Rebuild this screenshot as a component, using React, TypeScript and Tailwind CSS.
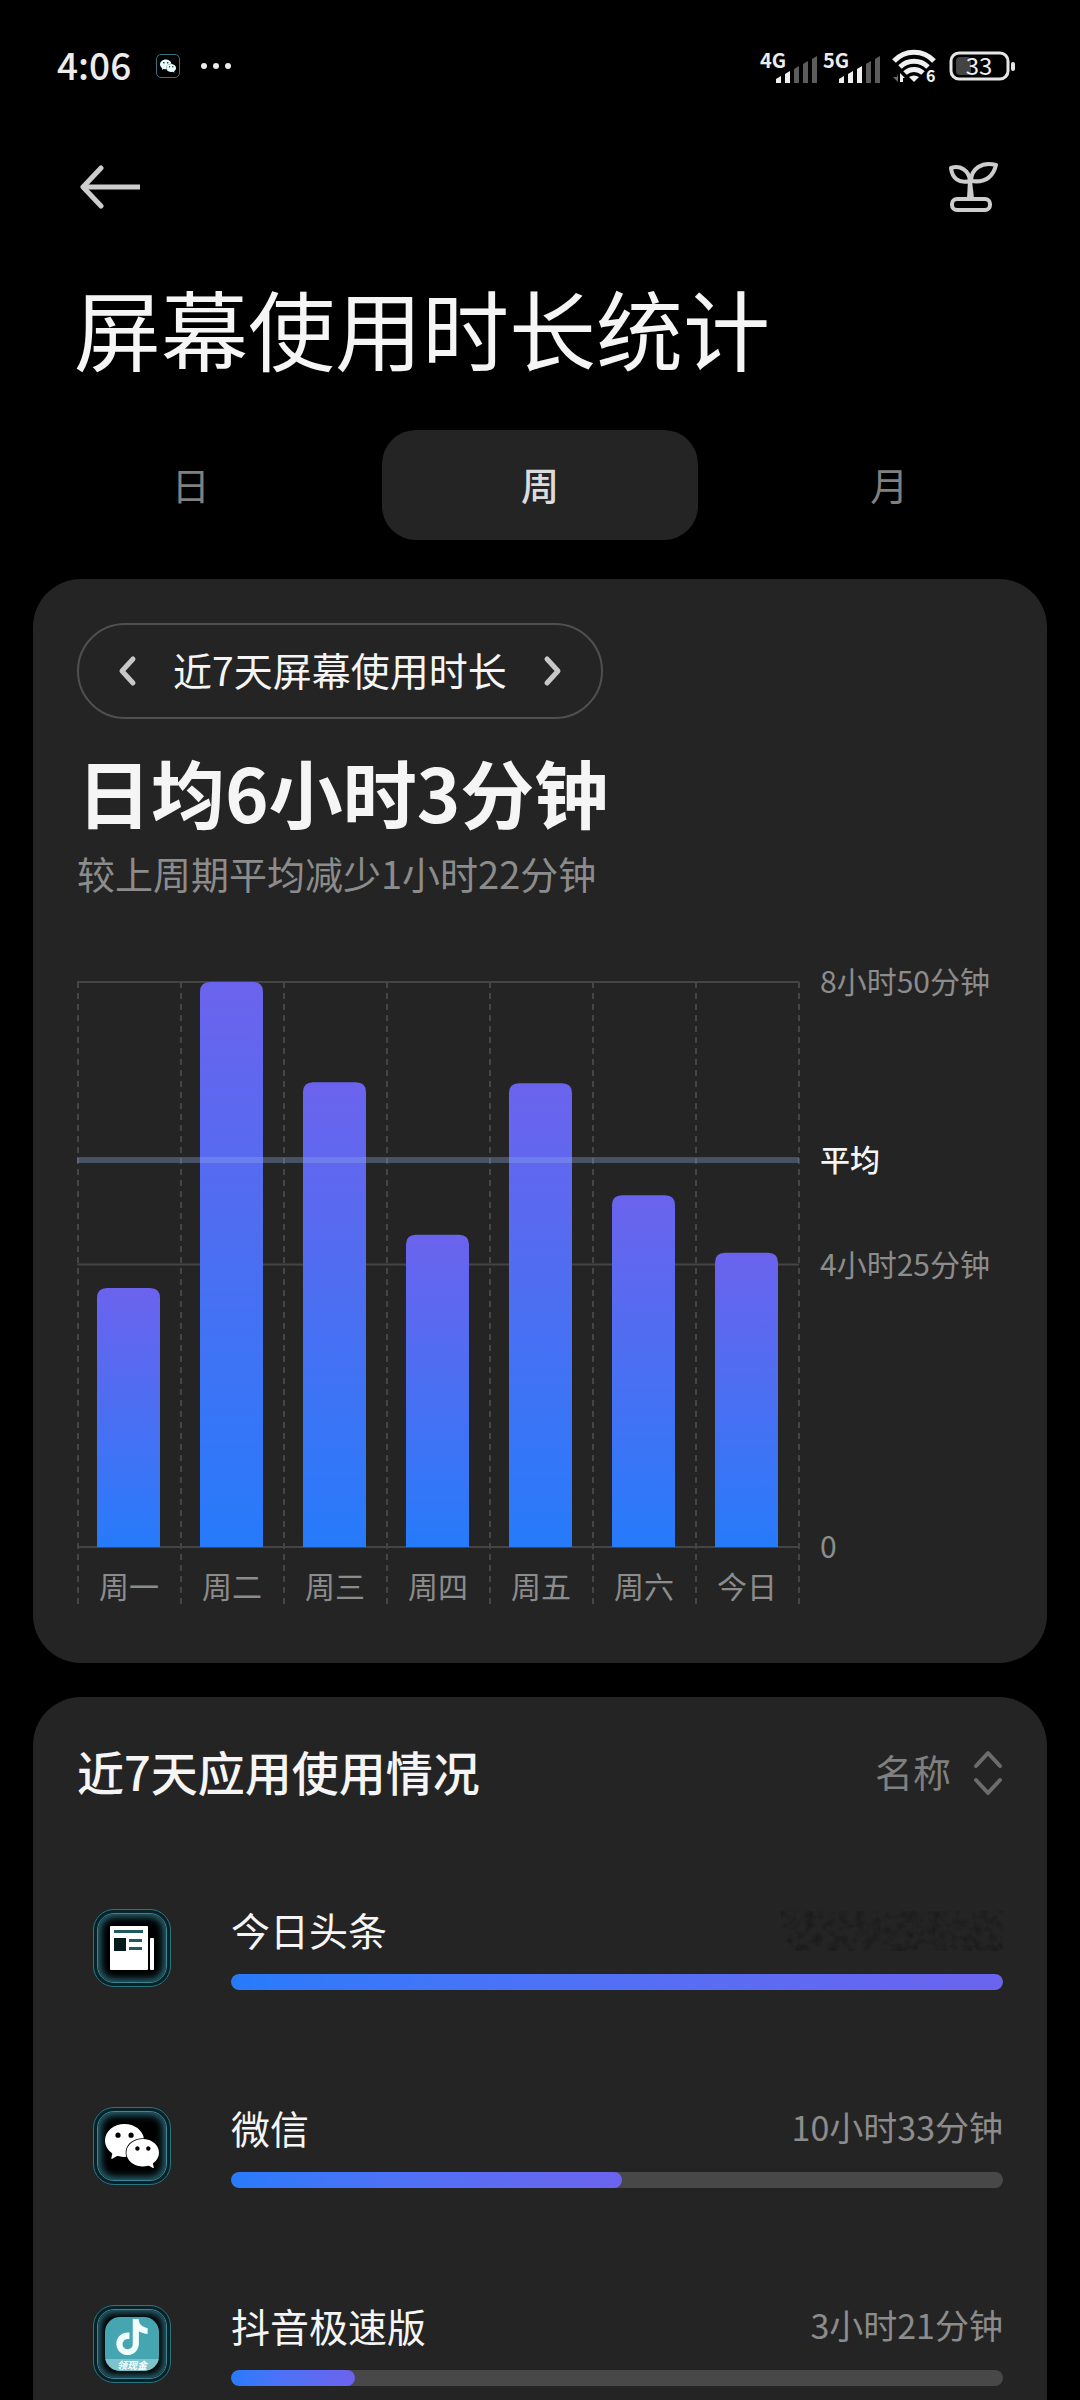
import React, { useState } from "react";
import { SiTiktok, SiWechat } from "react-icons/si";

// Dados da semana: altura da barra em minutos
const week = [
  { label: "周一", minutes: 243 },
  { label: "周二", minutes: 530 },
  { label: "周三", minutes: 436 },
  { label: "周四", minutes: 293 },
  { label: "周五", minutes: 435 },
  { label: "周六", minutes: 330 },
  { label: "今日", minutes: 276 },
];

const MAX_MINUTES = 530;
const AVERAGE_MINUTES = 363;

const apps = [
  { name: "今日头条", icon: "news", time: "", percent: 100 },
  { name: "微信", icon: "wechat", time: "10小时33分钟", percent: 50.7 },
  { name: "抖音极速版", icon: "douyin", time: "3小时21分钟", percent: 16.1 },
];

function Signal({ label, level }: { label: string; level: number }) {
  return (
    <span className="flex w-[58px] items-end">
      <span className="mb-3 w-4 text-[20px] leading-6 font-bold whitespace-nowrap">{label}</span>
      <svg viewBox="0 0 42 32" className="h-8 w-[42px] shrink-0">
        {[0, 1, 2, 3, 4].map((i) => (
          <path
            key={i}
            d={`M${i * 9} 31 v${-(4 + i * 5)} l5 -3 v${7 + i * 5} z`}
            fill={i < level ? "#f0f0f0" : "#5c5c5c"}
          />
        ))}
      </svg>
    </span>
  );
}

function StatusBar() {
  return (
    <div className="flex h-[132px] items-center justify-between pl-[57px] pr-16 text-[#ececec]">
      <div className="flex items-center">
        <span className="pb-1 text-[37px] leading-[48px] font-medium">4:06</span>
        <span className="ml-[25px] flex h-6 w-6 items-center justify-center rounded-[5px] border border-[#3f7280] bg-black">
          <SiWechat className="h-4 w-4 text-[#eafcff]" />
        </span>
        <svg viewBox="0 0 32 8" className="ml-5 h-2 w-8" fill="#ececec">
          <circle cx="4" cy="4" r="3" />
          <circle cx="16" cy="4" r="3" />
          <circle cx="28" cy="4" r="3" />
        </svg>
      </div>

      <div className="flex items-center">
        <Signal label="4G" level={2} />
        <span className="ml-[5px] flex">
          <Signal label="5G" level={3} />
        </span>
        {/* Wi-Fi 6 */}
        <svg viewBox="0 0 44 34" className="ml-[11px] h-[34px] w-11 overflow-visible" fill="none" stroke="#f0f0f0" strokeWidth="5">
          <path d="M2 12 A27 27 0 0 1 42 12" />
          <path d="M8 18 A20 20 0 0 1 36 18" />
          <path d="M13 24 A13 13 0 0 1 31 24" />
          <path d="M17 28 Q22 25 27 28 L22 33 Z" fill="#f0f0f0" stroke="none" />
          <path d="M6 25 v8 l-5 -5 h4 z" fill="#6a6a6a" stroke="none" />
          <path d="M8 33 v-9 l5 5 h-2 v4 z" fill="#f0f0f0" stroke="none" />
          <text x="34" y="33" fontSize="16" fontWeight="700" fill="#f0f0f0" stroke="#000" strokeWidth="2" paintOrder="stroke">
            6
          </text>
        </svg>
        <svg viewBox="0 0 67 30" className="ml-[13px] h-[30px] w-[67px] overflow-visible">
          <rect x="2" y="2" width="57" height="26" rx="8" fill="none" stroke="#e6e6e6" strokeWidth="3" />
          <rect x="7" y="6" width="15" height="18" rx="4" fill="#444" />
          <rect x="62" y="11" width="4" height="9" rx="2" fill="#e6e6e6" />
          <text x="30" y="24" fontSize="24" textAnchor="middle" fill="#f0f0f0">
            33
          </text>
        </svg>
      </div>
    </div>
  );
}

function UsageChart() {
  // A área do gráfico vai de y=42 até y=607
  const top = 42;
  const base = 607;
  const column = 103;
  const yOf = (minutes: number) => base - (minutes / MAX_MINUTES) * (base - top);

  return (
    <svg viewBox="0 0 926 670" className="mt-[41px] block w-full overflow-visible" role="img" aria-label="近7天屏幕使用时长">
      <defs>
        <linearGradient id="bar" x1="0" y1="0" x2="0" y2="1">
          <stop offset="0" stopColor="#6b63ee" />
          <stop offset="0.5" stopColor="#4a6ff2" />
          <stop offset="1" stopColor="#267bfb" />
        </linearGradient>
      </defs>

      {/* Linhas verticais tracejadas */}
      {[0, 1, 2, 3, 4, 5, 6, 7].map((i) => (
        <line key={i} x1={1 + i * column} x2={1 + i * column} y1={top} y2="665" stroke="#454545" strokeWidth="2" strokeDasharray="6 5" />
      ))}

      {[MAX_MINUTES, MAX_MINUTES / 2, 0].map((m) => (
        <line key={m} x1="0" x2="722" y1={yOf(m)} y2={yOf(m)} stroke="#444444" strokeWidth="2" />
      ))}

      {week.map((day, i) => {
        const x = 20 + i * column;
        const y = yOf(day.minutes);
        return (
          <g key={day.label}>
            <path d={`M${x} ${base} V${y + 10} q0 -10 10 -10 h43 q10 0 10 10 V${base} z`} fill="url(#bar)" />
            <text x={x + 32} y="658" fontSize="30" textAnchor="middle" fill="#8c8c8c">
              {day.label}
            </text>
          </g>
        );
      })}

      {/* Média */}
      <rect x="0" y={yOf(AVERAGE_MINUTES) - 3} width="722" height="6" fill="#8caae6" fillOpacity="0.35" />

      <g fontSize="30" fill="#8c8c8c">
        <text x="743" y={yOf(MAX_MINUTES) + 11}>8小时50分钟</text>
        <text x="743" y={yOf(AVERAGE_MINUTES) + 11} fill="#f5f5f5" fontWeight="500">平均</text>
        <text x="743" y={yOf(MAX_MINUTES / 2) + 11}>4小时25分钟</text>
        <text x="743" y={yOf(0) + 11}>0</text>
      </g>
    </svg>
  );
}

function AppIcon({ type }: { type: string }) {
  return (
    <span className="flex size-[78px] shrink-0 rounded-[21px] border border-[#2c7480] bg-[#06232a] p-[3px]">
      <span className="flex h-full w-full items-center justify-center rounded-[17px] border border-[#3f8492] bg-black shadow-[inset_0_0_7px_3px_#2a6472]">
        {type === "news" && (
          <svg viewBox="0 0 46 46" className="size-[46px]" fill="#fff">
            <rect x="1" y="1" width="38" height="44" rx="1" />
            <rect x="41" y="13" width="4" height="32" rx="1" />
            <rect x="5" y="5" width="29" height="3" fill="#1e5a5e" />
            <rect x="5" y="13" width="12" height="13" fill="#04191a" />
            <rect x="20" y="14" width="13" height="3" fill="#1e5a5e" />
            <rect x="20" y="22" width="13" height="3" fill="#1e5a5e" />
          </svg>
        )}
        {type === "wechat" && <SiWechat className="size-[54px] shrink-0 text-white" />}
        {type === "douyin" && (
          <span className="flex size-[54px] shrink-0 flex-col items-center overflow-hidden rounded-[15px] bg-[#45a5b0]">
            <SiTiktok className="mt-[2px] size-9 shrink-0 text-[#f2ffff]" />
            <span className="mt-1 w-full bg-[#7cc3cb] text-center text-[10px] leading-3 font-bold text-white italic">
              领现金
            </span>
          </span>
        )}
      </span>
    </span>
  );
}

// Mancha granulada no lugar do tempo oculto
function HiddenTime() {
  return (
    <svg viewBox="0 0 222 40" className="h-10 w-[222px]" aria-hidden="true">
      <filter id="grain" x="0" y="0" width="100%" height="100%" colorInterpolationFilters="sRGB">
        <feTurbulence type="fractalNoise" baseFrequency="0.12" numOctaves="3" seed="4" />
        <feColorMatrix values="0 0 0 0 0.1  0 0 0 0 0.1  0 0 0 0 0.1  2 0 0 0 -0.8" />
      </filter>
      <rect width="222" height="40" filter="url(#grain)" />
    </svg>
  );
}

export default function App() {
  const [tab, setTab] = useState("周");

  return (
    <main className="flex min-h-screen w-full flex-col bg-black font-['Noto_Sans_CJK_SC',sans-serif] text-[#f5f5f5]">
      <StatusBar />

      {/* Header */}
      <header className="flex h-[110px] items-center justify-between pr-[81px] pl-20">
        <button type="button" aria-label="返回">
          <svg viewBox="0 0 60 44" className="h-11 w-[60px]" fill="none" stroke="#cdcdcd" strokeWidth="5" strokeLinejoin="round">
            <path d="M3 22 H60" />
            <path d="M21 3 L3 22 L21 41" strokeLinecap="round" />
          </svg>
        </button>
        <button type="button" aria-label="健康使用">
          <svg viewBox="0 0 50 52" className="h-[52px] w-[50px]" fill="none" stroke="#cdcdcd" strokeWidth="4" strokeLinejoin="round">
            <path d="M2 7 C11 4 20 9 21 20 C10 23 3 17 2 7 Z" />
            <path d="M47 4 C33 0 22 8 22 20 C36 22 44 16 47 4 Z" />
            <path d="M19 20 h4 l2 17 h-7 z" fill="#cdcdcd" stroke="none" />
            <rect x="3" y="38" width="38" height="11" rx="5" />
          </svg>
        </button>
      </header>

      <h1 className="mt-[25px] px-[74px] text-[87px] leading-[120px]">屏幕使用时长统计</h1>

      {/* Abas */}
      <div className="mx-[33px] mt-[43px] grid grid-cols-3 gap-[34px]" role="tablist">
        {["日", "周", "月"].map((t) => (
          <button
            key={t}
            type="button"
            role="tab"
            aria-selected={tab === t}
            onClick={() => setTab(t)}
            className={
              tab === t
                ? "h-[110px] rounded-[34px] bg-[#242424] pb-1 text-[38px] font-medium text-[#dcdcdc]"
                : "h-[110px] rounded-[34px] pb-1 text-[38px] text-[#808080]"
            }
          >
            {t}
          </button>
        ))}
      </div>

      {/* Card do gráfico */}
      <section className="mx-[33px] mt-[39px] rounded-[48px] bg-[#242424] px-11 pt-11 pb-[53px]">
        <div className="flex h-24 w-fit items-center rounded-full border-2 border-[#505050] px-[38px]">
          <button type="button" aria-label="上一周期">
            <svg viewBox="0 0 20 32" className="h-8 w-5" fill="none" stroke="#c8c8c8" strokeWidth="5" strokeLinecap="round" strokeLinejoin="round">
              <path d="M16 4 L5 16 L16 28" />
            </svg>
          </button>
          <span className="mx-9 pb-1 text-[39px] leading-[52px]">近7天屏幕使用时长</span>
          <button type="button" aria-label="下一周期">
            <svg viewBox="0 0 20 32" className="h-8 w-5" fill="none" stroke="#c8c8c8" strokeWidth="5" strokeLinecap="round" strokeLinejoin="round">
              <path d="M4 4 L15 16 L4 28" />
            </svg>
          </button>
        </div>
        <h2 className="mt-[22px] text-[74px] leading-[100px] font-bold">日均6小时3分钟</h2>
        <p className="mt-[6px] text-[38px] leading-[52px] text-[#8c8c8c]">较上周期平均减少1小时22分钟</p>
        <UsageChart />
      </section>

      {/* Lista de apps */}
      <section className="mx-[33px] mt-[34px] flex-1 rounded-t-[48px] bg-[#242424] px-11 pt-11">
        <div className="flex items-center justify-between">
          <h2 className="pb-1 text-[47px] leading-[60px] font-medium">近7天应用使用情况</h2>
          <button type="button" className="flex items-center gap-[22px] text-[38px] leading-[52px] text-[#808080]">
            <span className="pb-1">名称</span>
            <svg viewBox="0 0 30 46" className="h-[46px] w-[30px]" fill="none" stroke="#6c6c6c" strokeWidth="4" strokeLinecap="round" strokeLinejoin="round">
              <path d="M3 16 L15 3 L27 16" />
              <path d="M3 30 L15 43 L27 30" />
            </svg>
          </button>
        </div>

        <ul className="mt-[100px] flex flex-col gap-[113px]">
          {apps.map((app) => (
            <li key={app.name} className="flex items-center gap-[60px] pl-4">
              <AppIcon type={app.icon} />
              <div className="flex-1">
                <div className="flex h-[52px] items-center justify-between">
                  <span className="pb-1 text-[39px] leading-[52px]">{app.name}</span>
                  {app.time ? (
                    <span className="pb-1 text-[34px] leading-[52px] text-[#8c8c8c]">{app.time}</span>
                  ) : (
                    <HiddenTime />
                  )}
                </div>
                <div className="mt-[17px] h-4 overflow-hidden rounded-full bg-[#484848]">
                  <div
                    className="h-full rounded-full bg-linear-to-r from-[#267bfb] to-[#6b63ee]"
                    style={{ width: `${app.percent}%` }}
                  />
                </div>
              </div>
            </li>
          ))}
        </ul>
      </section>
    </main>
  );
}
